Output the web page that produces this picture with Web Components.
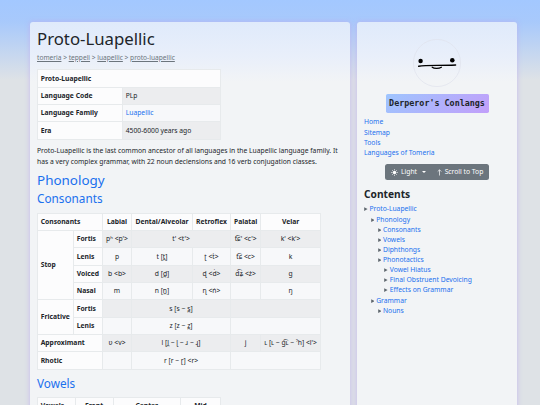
<!DOCTYPE html>
<html lang="en">
<head>
<meta charset="utf-8">
<title>Proto-Luapellic</title>
<style>
  html, body {
    margin: 0;
    height: 100%;
    overflow: hidden;
  }
  body {
    font: 6.75px/10.2px "Noto Sans", "DejaVu Sans", sans-serif;
    color: #212529;
  }
</style>
</head>
<body>
<wiki-page>
  <page-panel slot="main">
    <page-heading level="1">Proto-Luapellic</page-heading>
    <bread-crumbs path="tomeria,teppeli,luapellic,proto-luapellic"></bread-crumbs>
    <data-grid cols="85px 98px" rows="4">
      <data-cell head left span="2" row="1">Proto-Luapellic</data-cell>
      <data-cell head left>Language Code</data-cell><data-cell left odd>PLp</data-cell>
      <data-cell head left>Language Family</data-cell><data-cell left link>Luapellic</data-cell>
      <data-cell head left>Era</data-cell><data-cell left odd>4500-6000 years ago</data-cell>
    </data-grid>
    <page-text>Proto-Luapellic is the last common ancestor of all languages in the Luapellic language family. It has a very complex grammar, with 22 noun declensions and 16 verb conjugation classes.</page-text>
    <page-heading level="2">Phonology</page-heading>
    <page-heading level="3">Consonants</page-heading>
    <data-grid cols="36px 29px 29px 61px 38px 30.2px 59.8px" rows="9">
      <data-cell head left span="2">Consonants</data-cell>
      <data-cell head>Labial</data-cell>
      <data-cell head>Dental/Alveolar</data-cell>
      <data-cell head>Retroflex</data-cell>
      <data-cell head>Palatal</data-cell>
      <data-cell head>Velar</data-cell>

      <data-cell head left tall="4">Stop</data-cell>
      <data-cell head left>Fortis</data-cell>
      <data-cell odd>pʰ &lt;p'&gt;</data-cell>
      <data-cell odd span="2">t' &lt;t'&gt;</data-cell>
      <data-cell odd>t͡ɕ' &lt;c'&gt;</data-cell>
      <data-cell odd>k' &lt;k'&gt;</data-cell>

      <data-cell head left>Lenis</data-cell>
      <data-cell>p</data-cell>
      <data-cell>t [t̪]</data-cell>
      <data-cell>ʈ &lt;ṫ&gt;</data-cell>
      <data-cell>t͡ɕ &lt;c&gt;</data-cell>
      <data-cell>k</data-cell>

      <data-cell head left>Voiced</data-cell>
      <data-cell odd>b &lt;b&gt;</data-cell>
      <data-cell odd>d [d̪]</data-cell>
      <data-cell odd>ɖ &lt;ḋ&gt;</data-cell>
      <data-cell odd>d͡ʑ &lt;ż&gt;</data-cell>
      <data-cell odd>g</data-cell>

      <data-cell head left>Nasal</data-cell>
      <data-cell>m</data-cell>
      <data-cell>n [n̪]</data-cell>
      <data-cell>ɳ &lt;ṅ&gt;</data-cell>
      <data-cell></data-cell>
      <data-cell>ŋ</data-cell>

      <data-cell head left tall="2">Fricative</data-cell>
      <data-cell head left>Fortis</data-cell>
      <data-cell odd></data-cell>
      <data-cell odd span="2">s [s ~ s̪]</data-cell>
      <data-cell odd span="2"></data-cell>

      <data-cell head left>Lenis</data-cell>
      <data-cell></data-cell>
      <data-cell span="2">z [z ~ z̪]</data-cell>
      <data-cell span="2"></data-cell>

      <data-cell head left span="2">Approximant</data-cell>
      <data-cell odd>ʋ &lt;v&gt;</data-cell>
      <data-cell odd span="2">l [l̪ ~ ɭ ~ ɹ ~ ɻ]</data-cell>
      <data-cell odd>j</data-cell>
      <data-cell odd>ʟ [ʟ ~ g͡ʟ ~ ˀh] &lt;l'&gt;</data-cell>

      <data-cell head left span="2">Rhotic</data-cell>
      <data-cell></data-cell>
      <data-cell span="2">r [r ~ ɽ] &lt;r&gt;</data-cell>
      <data-cell span="2"></data-cell>
    </data-grid>
    <page-heading level="3">Vowels</page-heading>
    <data-grid cols="37.5px 38px 67.5px 40px" rows="1">
      <data-cell head left>Vowels</data-cell>
      <data-cell head>Front</data-cell>
      <data-cell head>Center</data-cell>
      <data-cell head>Mid</data-cell>
    </data-grid>
  </page-panel>

  <page-panel slot="side">
    <site-avatar></site-avatar>
    <site-title>Derperor's Conlangs</site-title>
    <site-links items="Home,Sitemap,Tools,Languages of Tomeria"></site-links>
    <page-buttons></page-buttons>
    <page-contents>
      <toc-item depth="0">Proto-Luapellic</toc-item>
      <toc-item depth="1">Phonology</toc-item>
      <toc-item depth="2">Consonants</toc-item>
      <toc-item depth="2">Vowels</toc-item>
      <toc-item depth="2">Diphthongs</toc-item>
      <toc-item depth="2">Phonotactics</toc-item>
      <toc-item depth="3">Vowel Hiatus</toc-item>
      <toc-item depth="3">Final Obstruent Devoicing</toc-item>
      <toc-item depth="3">Effects on Grammar</toc-item>
      <toc-item depth="1">Grammar</toc-item>
      <toc-item depth="2">Nouns</toc-item>
    </page-contents>
  </page-panel>
</wiki-page>

<script>
class WikiPage extends HTMLElement {
  constructor() {
    super()
    this.attachShadow({ mode: 'open' })
    this.shadowRoot.innerHTML = `
      <style>
        :host {
          display: grid;
          grid-template-columns: 320px 160px;
          column-gap: 7px;
          box-sizing: border-box;
          height: 100vh;
          padding: 22px 0 0 30px;
          overflow: hidden;
          background: linear-gradient(#a3c8ff, #a8c9fb 22px, #dee2e6 80px);
        }
      </style>
      <slot name="main"></slot>
      <slot name="side"></slot>
    `
  }
}

class PagePanel extends HTMLElement {
  constructor() {
    super()
    this.attachShadow({ mode: 'open' })
    this.shadowRoot.innerHTML = `
      <style>
        :host {
          display: block;
          box-sizing: border-box;
          height: 460px;
          padding: 7px 7px 0;
          border-radius: 3px;
          background: linear-gradient(#dfeafb, #e9effa 35px, #f2f4f6 60px);
          box-shadow: 0 0 5px rgba(190, 170, 240, 0.75);
        }
      </style>
      <slot></slot>
    `
  }
}

class PageHeading extends HTMLElement {
  constructor() {
    super()
    this.attachShadow({ mode: 'open' })
    this.shadowRoot.innerHTML = `
      <style>
        :host {
          display: block;
          color: #1b70ee;
        }
        :host([level="1"]) {
          font-size: 16.75px;
          line-height: 20.4px;
          margin-bottom: 3.4px;
          color: #212529;
        }
        :host([level="2"]) {
          font-size: 13.45px;
          line-height: 16.3px;
          margin-bottom: 2.9px;
        }
        :host([level="3"]) {
          font-size: 11.75px;
          line-height: 14.3px;
          margin-bottom: 7px;
        }
      </style>
      <slot></slot>
    `
  }
}

class BreadCrumbs extends HTMLElement {
  constructor() {
    super()
    this.attachShadow({ mode: 'open' })
  }

  connectedCallback() {
    const links = this.getAttribute('path').split(',').map(name => `<a>${name}</a>`)
    this.shadowRoot.innerHTML = `
      <style>
        :host {
          display: block;
          margin-bottom: 6.2px;
          font-size: 6.62px;
          color: #6c757d;
        }
        a {
          text-decoration: underline;
        }
      </style>
      ${links.join(' &gt; ')}
    `
  }
}

class DataGrid extends HTMLElement {
  constructor() {
    super()
    this.attachShadow({ mode: 'open' })
  }

  connectedCallback() {
    this.shadowRoot.innerHTML = `
      <style>
        :host {
          display: grid;
          width: max-content;
          grid-template-columns: ${this.getAttribute('cols')};
          grid-template-rows: repeat(${this.getAttribute('rows')}, 17.33px);
          margin-bottom: 6px;
          border: solid #e7eaec;
          border-width: 1px 0 0 1px;
        }
      </style>
      <slot></slot>
    `
  }
}

class DataCell extends HTMLElement {
  constructor() {
    super()
    this.attachShadow({ mode: 'open' })
  }

  connectedCallback() {
    this.style.gridColumn = `span ${this.getAttribute('span') || 1}`
    this.style.gridRow = `span ${this.getAttribute('tall') || 1}`
    this.shadowRoot.innerHTML = `
      <style>
        :host {
          display: flex;
          align-items: center;
          justify-content: center;
          box-sizing: border-box;
          min-width: 0;
          padding-top: 0.8px;
          white-space: nowrap;
          border: solid #e7eaec;
          border-width: 0 1px 1px 0;
          background: #f7f8fa;
        }
        :host([odd]) {
          background: #ecedef;
        }
        :host([head]) {
          font-weight: bold;
          background: #fcfcfd;
        }
        :host([left]) {
          justify-content: flex-start;
          padding-left: 2.7px;
        }
        :host([link]) {
          color: #1b70ee;
        }
      </style>
      <slot></slot>
    `
  }
}

class PageText extends HTMLElement {
  constructor() {
    super()
    this.attachShadow({ mode: 'open' })
    this.shadowRoot.innerHTML = `
      <style>
        :host {
          display: block;
          padding-top: 0.8px;
          margin-bottom: 5.4px;
        }
      </style>
      <slot></slot>
    `
  }
}

class SiteAvatar extends HTMLElement {
  constructor() {
    super()
    this.attachShadow({ mode: 'open' })
    this.shadowRoot.innerHTML = `
      <style>
        :host {
          display: flex;
          justify-content: center;
          padding: 10px 0 7px;
        }
        svg {
          display: block;
        }
      </style>
      <svg width="48" height="48" viewBox="0 0 48 48">
        <circle cx="24" cy="24" r="23.6" fill="none" stroke="#dfe3ec" stroke-width="0.7"/>
        <circle cx="7.6" cy="22" r="2.2"/>
        <circle cx="39.3" cy="21.2" r="2.3"/>
        <path d="M5.7 27.3C13 26 25 26.7 42.6 26" fill="none" stroke="#000" stroke-width="1.4" stroke-linecap="round"/>
        <path d="M19.2 28.2C21 29.7 26 29.7 28.4 28.2" fill="none" stroke="#000" stroke-width="1.2" stroke-linecap="round"/>
      </svg>
    `
  }
}

class SiteTitle extends HTMLElement {
  constructor() {
    super()
    this.attachShadow({ mode: 'open' })
    this.shadowRoot.innerHTML = `
      <style>
        :host {
          display: block;
          width: 103px;
          margin: 0 auto 4px;
          border-radius: 1.7px;
          background: linear-gradient(135deg, #9ec5fe, #c29ffa);
          font: bold 8.4px/19.3px "DejaVu Sans Mono", monospace;
          text-align: center;
          white-space: nowrap;
        }
      </style>
      <slot></slot>
    `
  }
}

class SiteLinks extends HTMLElement {
  constructor() {
    super()
    this.attachShadow({ mode: 'open' })
  }

  connectedCallback() {
    const links = this.getAttribute('items').split(',').map(name => `<a>${name}</a>`)
    this.shadowRoot.innerHTML = `
      <style>
        :host {
          display: block;
          margin-bottom: 6.3px;
          color: #1b70ee;
        }
        a {
          display: block;
        }
      </style>
      ${links.join('')}
    `
  }
}

class PageButtons extends HTMLElement {
  constructor() {
    super()
    this.attachShadow({ mode: 'open' })
    this.shadowRoot.innerHTML = `
      <style>
        :host {
          display: flex;
          align-items: center;
          box-sizing: border-box;
          width: 104px;
          height: 16px;
          margin: 0 auto 7px;
          padding: 0 5.5px;
          border-radius: 2.5px;
          background: #6c757d;
          color: #fff;
          white-space: nowrap;
        }
        svg {
          flex: none;
          fill: #fff;
          margin-right: 3.5px;
        }
        .caret {
          margin: 0 11px 0 5px;
          border: 2px solid transparent;
          border-top-color: #fff;
          border-bottom: 0;
        }
        .arrow {
          margin-right: 2.6px;
        }
      </style>
      <svg width="7" height="7" viewBox="0 0 16 16">
        <circle cx="8" cy="8" r="4"/>
        <path d="M8 0v3M8 13v3M0 8h3M13 8h3M2.3 2.3l2.2 2.2M11.5 11.5l2.2 2.2M2.3 13.7l2.2-2.2M11.5 4.5l2.2-2.2" stroke="#fff" stroke-width="1.3"/>
      </svg>
      <span>Light</span>
      <span class="caret"></span>
      <svg class="arrow" width="5" height="7" viewBox="0 0 5 7">
        <path d="M2.5 6.5V.8M.7 2.6L2.5.8l1.8 1.8" fill="none" stroke="#fff" stroke-width="0.7"/>
      </svg>
      <span>Scroll to Top</span>
    `
  }
}

class PageContents extends HTMLElement {
  constructor() {
    super()
    this.attachShadow({ mode: 'open' })
    this.shadowRoot.innerHTML = `
      <style>
        :host {
          display: block;
        }
        h5 {
          margin: 0 0 2px;
          font-size: 10.2px;
          line-height: 15px;
        }
      </style>
      <h5>Contents</h5>
      <slot></slot>
    `
  }
}

class TocItem extends HTMLElement {
  constructor() {
    super()
    this.attachShadow({ mode: 'open' })
  }

  connectedCallback() {
    this.style.paddingLeft = `${this.getAttribute('depth') * 6.8}px`
    this.shadowRoot.innerHTML = `
      <style>
        :host {
          display: flex;
          align-items: center;
          line-height: 10.13px;
          color: #1b70ee;
        }
        svg {
          margin-right: 1.8px;
          fill: #5f676e;
        }
      </style>
      <svg width="3.6" height="4" viewBox="0 0 3.6 4"><path d="M.2.3L3.6 2.1.2 3.9z"/></svg><slot></slot>
    `
  }
}

customElements.define('wiki-page', WikiPage)
customElements.define('page-panel', PagePanel)
customElements.define('page-heading', PageHeading)
customElements.define('bread-crumbs', BreadCrumbs)
customElements.define('data-grid', DataGrid)
customElements.define('data-cell', DataCell)
customElements.define('page-text', PageText)
customElements.define('site-avatar', SiteAvatar)
customElements.define('site-title', SiteTitle)
customElements.define('site-links', SiteLinks)
customElements.define('page-buttons', PageButtons)
customElements.define('page-contents', PageContents)
customElements.define('toc-item', TocItem)
</script>
</body>
</html>
